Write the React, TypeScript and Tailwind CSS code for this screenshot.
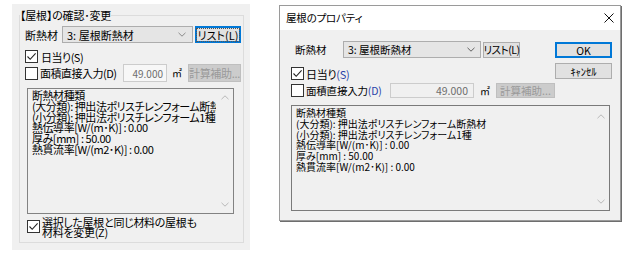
import React from "react";

function Check({ checked, className = "" }: { checked?: boolean; className?: string }) {
  return (
    <span className={"flex w-[13px] h-[13px] border border-[#333333] bg-white items-center justify-center shrink-0 " + className}>
      {checked && (
        <svg width="11" height="11" viewBox="0 0 11 11">
          <path d="M1.5 5.5 L4.2 8.3 L9.6 2.4" fill="none" stroke="#222222" strokeWidth="1.1" />
        </svg>
      )}
    </span>
  );
}

function Chevron({ color = "#606060" }: { color?: string }) {
  return (
    <svg width="8" height="5" viewBox="0 0 8 5">
      <path d="M0.5 0.8 L4 4.2 L7.5 0.8" fill="none" stroke={color} strokeWidth="1" />
    </svg>
  );
}

function ChevronUp({ color = "#b8b8b8" }: { color?: string }) {
  return (
    <svg width="8" height="5" viewBox="0 0 8 5">
      <path d="M0.5 4.2 L4 0.8 L7.5 4.2" fill="none" stroke={color} strokeWidth="1" />
    </svg>
  );
}

const lines = [
  "断熱材種類",
  "(大分類): 押出法ポリスチレンフォーム断熱材",
  "(小分類): 押出法ポリスチレンフォーム1種",
  "熱伝導率[W/(m･K)] : 0.00",
  "厚み[mm] : 50.00",
  "熱貫流率[W/(m2･K)] : 0.00",
];

export default function App() {
  return (
    <div className="w-[636px] h-[261px] bg-white flex items-start text-[#000000] font-['Noto_Sans_CJK_JP',sans-serif] [font-feature-settings:'palt'] overflow-hidden">
      {/* Left panel */}
      <div className="ml-[12px] mt-[4px] w-[238px] h-[246px] bg-[#f0f0f0] pt-[4px] pl-[7px] shrink-0">
        <fieldset className="w-[225px] h-[235px] border border-[#dcdcdc] p-0 m-0">
          <legend className="px-0 text-[11px] leading-[14px] tracking-[-0.2px]">【屋根】の確認･変更</legend>
          <div className="pl-[5px]">
            <div className="mt-[4px] h-[17px] flex items-center">
              <span className="w-[37px] text-[11px] leading-[14px]">断熱材</span>
              <div className="w-[131px] h-[17px] border border-[#adadad] bg-[#e5e5e5] flex items-center pl-[4px] pr-[6px] text-[11px] leading-[14px]">
                <span className="flex-1 whitespace-nowrap">3: 屋根断熱材</span>
                <Chevron color="#8a8a8a" />
              </div>
              <div className="ml-[2px] w-[46px] h-[17px] border-2 border-[#0078d7] bg-[#e1e1e1] flex items-center justify-center text-[11px] leading-[12px] whitespace-nowrap">
                <span className="outline outline-1 outline-dotted outline-[#555555] px-[1px]">リスト(L)</span>
              </div>
            </div>
            <div className="mt-[7px] h-[13px] flex items-center">
              <Check checked />
              <span className="ml-[3px] text-[11px] leading-[14px] tracking-[-0.5px] whitespace-nowrap">日当り(S)</span>
            </div>
            <div className="mt-[1px] h-[18px] flex items-center">
              <Check />
              <span className="ml-[2px] w-[83px] text-[11px] leading-[14px] tracking-[-0.5px] whitespace-nowrap">面積直接入力(D)</span>
              <div className="w-[44px] h-[18px] border border-[#cccccc] bg-[#f7f7f7] flex items-center justify-end pr-[3px] text-[10px] text-[#6d6d6d]">
                49.000
              </div>
              <span className="ml-[5px] w-[16px] text-[10px] leading-[12px]">㎡</span>
              <div className="w-[53px] h-[18px] border border-[#bfbfbf] bg-[#cccccc] flex items-center justify-center text-[11px] tracking-[-0.3px] text-[#9a9a9a] whitespace-nowrap">
                計算補助...
              </div>
            </div>
            <div className="mt-[6px] ml-[2px] w-[207px] h-[126px] border border-[#828282] bg-[#f0f0f0] flex">
              <div className="flex-1 overflow-hidden pl-[4px] pt-[1px] text-[11px] leading-[10.8px] tracking-[-0.45px] whitespace-nowrap">
                {lines.map((l, i) => (
                  <div key={i}>{l}</div>
                ))}
              </div>
              <div className="w-[17px] flex flex-col justify-between items-center py-[6px]">
                <ChevronUp />
                <Chevron color="#b8b8b8" />
              </div>
            </div>
            <div className="mt-[6px] ml-[2px] flex items-start">
              <Check checked />
              <div className="ml-[2px] -mt-[3px] text-[11px] leading-[10px] tracking-[-0.3px] whitespace-nowrap">
                <div>選択した屋根と同じ材料の屋根も</div>
                <div>材料を変更(Z)</div>
              </div>
            </div>
          </div>
        </fieldset>
      </div>

      {/* Right dialog */}
      <div className="ml-[29px] mt-[5px] w-[342px] h-[216px] border border-[#9a9a9a] shadow-[1px_1px_0_#6e6e6e] bg-[#f0f0f0] flex flex-col shrink-0">
        <div className="h-[24px] bg-white flex items-center pl-[6px] pr-[6px]">
          <span className="text-[10.5px] leading-[14px] tracking-[-0.2px]">屋根のプロパティ</span>
          <svg className="ml-auto" width="10" height="10" viewBox="0 0 10 10">
            <path d="M0.5 0.5 L9.5 9.5 M9.5 0.5 L0.5 9.5" stroke="#111111" strokeWidth="1" />
          </svg>
        </div>
        <div className="flex-1 pl-[11px] pr-[8px] pt-[11px]">
          <div className="flex">
            <div className="flex-1">
              <div className="h-[17px] flex items-center">
                <span className="ml-[4px] w-[48px] text-[10.5px] leading-[13px]">断熱材</span>
                <div className="w-[138px] h-[17px] border border-[#adadad] bg-[#e5e5e5] flex items-center pl-[4px] pr-[5px] text-[10.5px] leading-[14px]">
                  <span className="flex-1 whitespace-nowrap">3: 屋根断熱材</span>
                  <Chevron />
                </div>
                <div className="ml-[2px] w-[37px] h-[16px] border border-[#adadad] bg-[#e1e1e1] flex items-center justify-center text-[10.5px] leading-[13px] tracking-[-0.5px] whitespace-nowrap">
                  リスト(L)
                </div>
              </div>
              <div className="mt-[9px] h-[13px] flex items-center">
                <Check checked />
                <span className="ml-[2px] text-[11px] leading-[14px] tracking-[-0.3px] whitespace-nowrap">
                  日当り<span className="text-[#2a44a8]">(S)</span>
                </span>
              </div>
              <div className="mt-[3px] h-[15px] flex items-center">
                <Check />
                <span className="ml-[2px] w-[84px] text-[10.5px] leading-[14px] tracking-[-0.2px] whitespace-nowrap">
                  面積直接入力<span className="text-[#2a44a8]">(D)</span>
                </span>
                <div className="w-[84px] h-[15px] border border-[#cccccc] bg-[#f0f0f0] flex items-center justify-end pr-[5px] text-[10.5px] text-[#6d6d6d]">
                  49.000
                </div>
                <span className="ml-[6px] w-[16px] text-[10px] leading-[12px]">㎡</span>
                <div className="w-[59px] h-[15px] border border-[#bfbfbf] bg-[#cccccc] flex items-center justify-center text-[10.5px] text-[#9a9a9a] whitespace-nowrap">
                  計算補助...
                </div>
              </div>
            </div>
            <div className="w-[74px] flex flex-col">
              <div className="mt-[1px] h-[16px] border-2 border-[#0078d7] bg-[#e1e1e1] flex items-center justify-center text-[10.5px] leading-[13px]">
                OK
              </div>
              <div className="mt-[5px] h-[16px] border border-[#adadad] bg-[#e1e1e1] flex items-center justify-center text-[10.5px] leading-[13px]">
                ｷｬﾝｾﾙ
              </div>
            </div>
          </div>
          <div className="mt-[7px] w-[319px] h-[106px] border border-[#7a7a7a] bg-[#f0f0f0] flex">
            <div className="flex-1 overflow-hidden pl-[4px] pt-[2px] text-[10px] leading-[10.8px] whitespace-nowrap">
              {lines.map((l, i) => (
                <div key={i}>{l}</div>
              ))}
            </div>
            <div className="w-[16px] flex flex-col justify-between items-center pt-[8px] pb-[6px]">
              <ChevronUp />
              <Chevron color="#b8b8b8" />
            </div>
          </div>
        </div>
      </div>
    </div>
  );
}
